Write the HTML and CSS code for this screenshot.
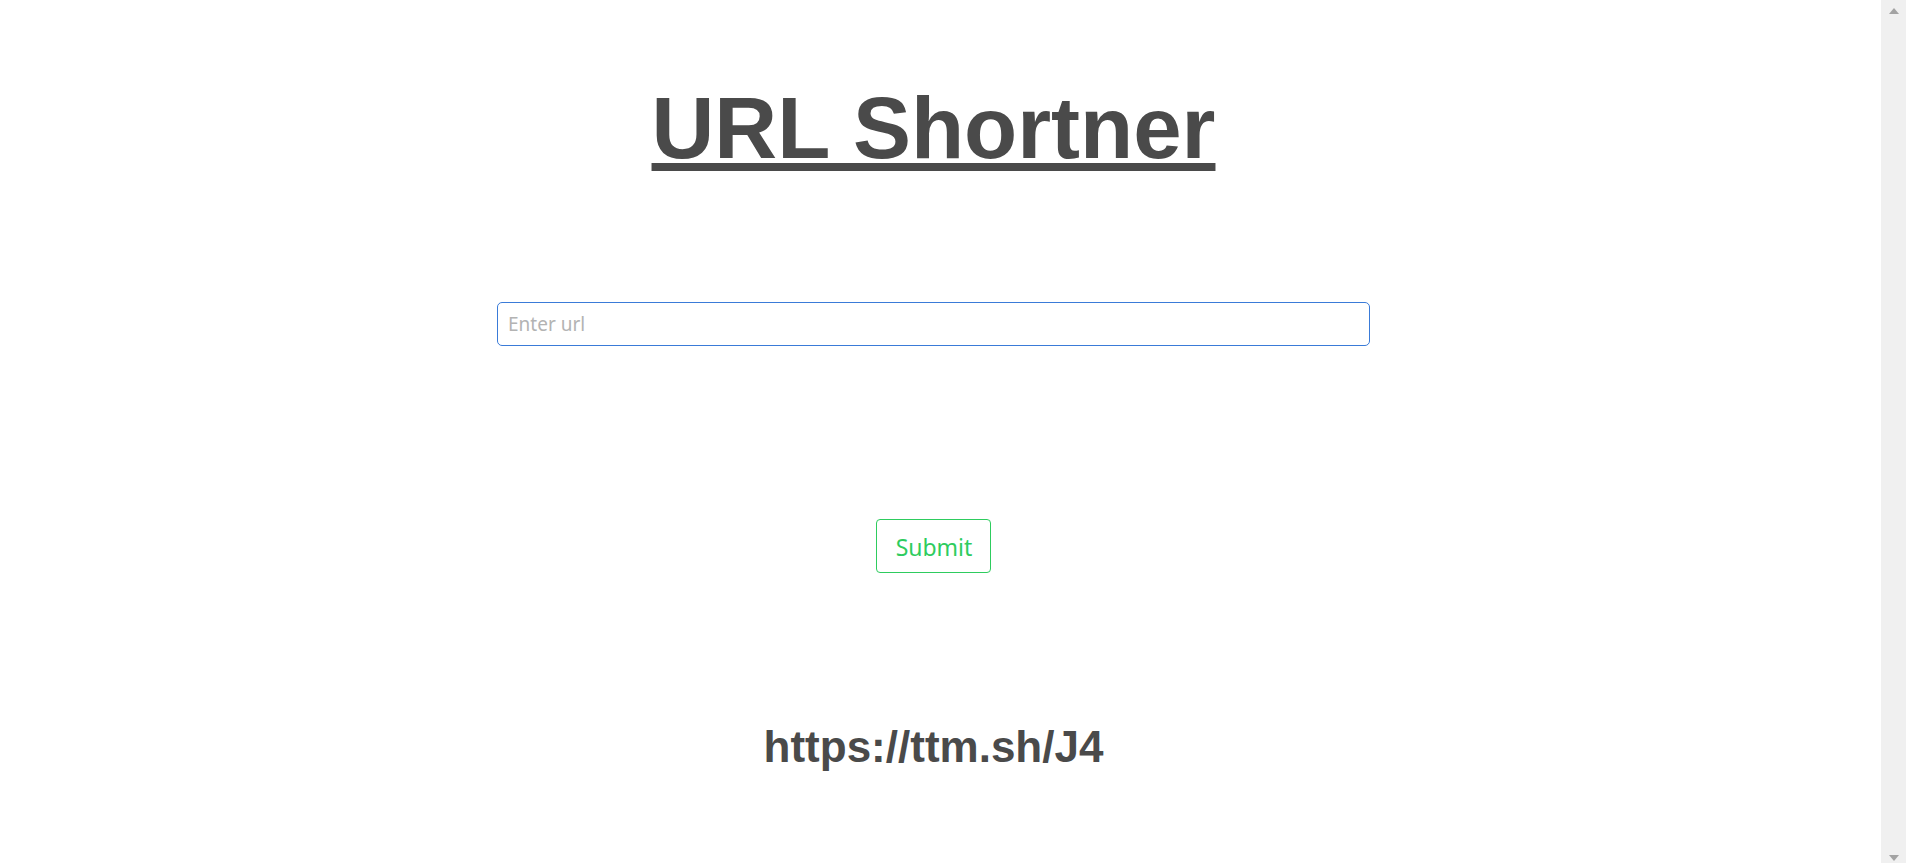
FILE: index.html
```html
<!DOCTYPE html>
<html lang="en">
<head>
<meta charset="utf-8">
<title>URL Shortner</title>
<link rel="stylesheet" href="styles.css">
</head>
<body>
<main class="page">
  <h1 class="title">URL Shortner</h1>
  <form class="form">
    <input class="url-input" type="text" placeholder="Enter url">
    <button class="submit" type="button">Submit</button>
  </form>
  <h2 class="result">https://ttm.sh/J4</h2>
</main>
<div class="scrollbar" aria-hidden="true">
  <span class="arrow arrow-up"></span>
  <span class="arrow arrow-down"></span>
</div>
</body>
</html>
```

FILE: styles.css
```css
body {
  margin: 0;
  background: #ffffff;
  font-family: "Liberation Sans", Arial, sans-serif;
}
.page {
  display: flex;
  flex-direction: column;
  align-items: center;
  padding: 78px 39px 0 0;
}
.title {
  margin: 0;
  font-size: 87px;
  line-height: 100px;
  font-weight: 700;
  color: #4a4a4a;
  text-decoration: underline;
  text-decoration-thickness: 8px;
  text-underline-offset: 5px;
}
.form {
  display: flex;
  flex-direction: column;
  align-items: center;
  margin-top: 124px;
}
.url-input {
  box-sizing: border-box;
  width: 873px;
  height: 44px;
  padding: 0 10px;
  border: 1px solid #3a7bd8;
  border-radius: 5px;
  font-family: "Segoe UI", "Noto Sans", sans-serif;
  font-size: 19px;
  color: #333;
  outline: none;
}
.url-input::placeholder {
  color: #b3b3b3;
}
.submit {
  box-sizing: border-box;
  margin-top: 173px;
  width: 115px;
  height: 54px;
  padding: 0 0 0 1px;
  background: #ffffff;
  border: 1px solid #2ecc5e;
  border-radius: 4px;
  color: #2ecc5e;
  font-family: "Segoe UI", "Noto Sans", sans-serif;
  font-size: 23px;
  line-height: 54px;
}
.result {
  margin: 149px 0 0;
  font-size: 44px;
  line-height: 50px;
  font-weight: 700;
  color: #4a4a4a;
}
.scrollbar {
  position: fixed;
  top: 0;
  right: 0;
  bottom: 0;
  width: 25px;
  background: #f0f0f0;
  display: flex;
  flex-direction: column;
  justify-content: space-between;
  align-items: center;
  padding: 8px 0 2px;
  box-sizing: border-box;
}
.arrow {
  width: 0;
  height: 0;
  border-left: 5.5px solid transparent;
  border-right: 5.5px solid transparent;
}
.arrow-up {
  border-bottom: 6px solid #a3a3a3;
}
.arrow-down {
  border-top: 6px solid #a3a3a3;
}
```
